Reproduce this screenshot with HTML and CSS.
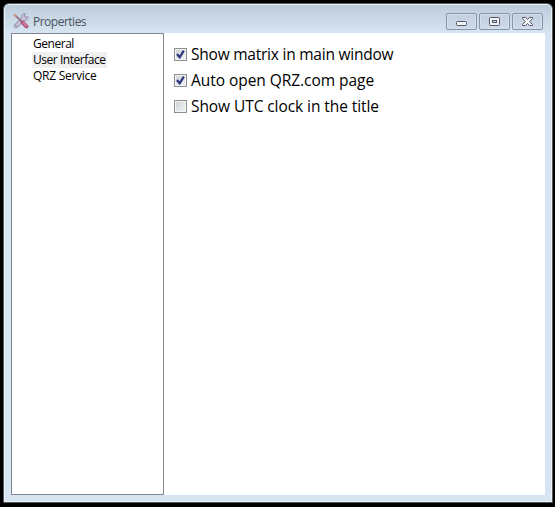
FILE: index.html
```html
<!DOCTYPE html>
<html lang="en">
<head>
<meta charset="utf-8">
<title>Properties</title>
<link rel="stylesheet" href="styles.css">
</head>
<body>
<div class="window">
  <header class="titlebar">
    <svg class="app-icon" width="16" height="16" viewBox="0 0 16 16">
      <path d="M3 13 11 5" stroke="#8f86a8" stroke-width="4.400" stroke-linecap="round"/>
      <path d="M14.800 3.500 12.800 5 11 3.500 12.300 .8C9.300 .6 8 3 8.700 5.500L10.700 7.500C13.500 7.800 15.600 6 14.800 3.500Z" fill="#c9c6dc" stroke="#8f86a8" stroke-width=".9"/>
      <path d="M3 13 11 5" stroke="#c9c6dc" stroke-width="2.600" stroke-linecap="round"/>
      <circle cx="2.800" cy="13.200" r="1.100" fill="#e4ebf4" stroke="#8f86a8" stroke-width=".7"/>
      <path d="M2 2 9 9" stroke="#927c86" stroke-width="1.900"/>
      <path d="M1 1.500 3.500 3.500" stroke="#c69a84" stroke-width="2.400"/>
      <path d="M9.700 9.700 13.400 13.400" stroke="#b4557f" stroke-width="4" stroke-linecap="round"/>
      <path d="M10 9.500 13.500 13" stroke="#d58ba8" stroke-width="1.200"/>
    </svg>
    <h1 class="title"><span>Properties</span></h1>
    <div class="controls">
      <button class="control" aria-label="Minimize"><svg width="29" height="15" viewBox="0 0 29 15"><rect x="9.500" y="7.500" width="10" height="4" rx="1" fill="#f4f4f4" stroke="#535666"/></svg></button>
      <button class="control" aria-label="Maximize"><svg width="29" height="15" viewBox="0 0 29 15"><rect x="9.500" y="3.500" width="10" height="8" rx="1" fill="#f4f4f4" stroke="#535666"/><rect x="12.500" y="6.500" width="4" height="2" fill="#c3d0e0" stroke="#535666"/></svg></button>
      <button class="control" aria-label="Close"><svg width="29" height="15" viewBox="0 0 29 15"><path d="M9.500 3.500H12.500L14.500 5.500 16.500 3.500H19.500V4.500L16.700 7.500 19.500 10.500V11.500H16.500L14.500 9.500 12.500 11.500H9.500V10.500L12.300 7.500 9.500 4.500Z" fill="#f4f4f4" stroke="#535666"/></svg></button>
    </div>
  </header>
  <main class="content">
    <nav class="tree">
      <a class="item">General</a>
      <a class="item selected">User Interface</a>
      <a class="item service">QRZ Service</a>
    </nav>
    <section class="options">
      <label class="option"><span class="box"><svg width="9" height="9" viewBox="0 0 9 9"><path d="M1 4 3.700 7.300 7.800 .6" fill="none" stroke="#2c3580" stroke-width="2.200"/></svg></span><span class="label matrix">Show matrix in main window</span></label>
      <label class="option"><span class="box"><svg width="9" height="9" viewBox="0 0 9 9"><path d="M1 4 3.700 7.300 7.800 .6" fill="none" stroke="#2c3580" stroke-width="2.200"/></svg></span><span class="label">Auto open QRZ.com page</span></label>
      <label class="option"><span class="box"></span><span class="label clock">Show UTC clock in the title</span></label>
    </section>
  </main>
</div>
</body>
</html>
```

FILE: styles.css
```css
* { box-sizing: border-box; }
body {
  margin: 0;
  height: 507px;
  padding: 3px 2px 4px 3px;
  background: #000;
  font-family: "Open Sans", "Noto Sans", sans-serif;
  overflow: hidden;
}
.window {
  height: 500px;
  border: 1px solid #55585c;
  border-radius: 6px 6px 0 0;
  padding: 0 7px 6px;
  background: linear-gradient(#bccbdb, #d7e4f1 29px, #d7e4f1);
  box-shadow: inset 0 0 0 1px #edf2f7;
}
.titlebar { height: 29px; display: flex; }
.app-icon { margin: 9px 0 0 2px; fill: none; }
.title {
  margin: 9px 0 0 4px;
  font-size: 12px;
  line-height: 17px;
  font-weight: 400;
  color: #4a525c;
  letter-spacing: -.5px;
}
.controls { display: flex; gap: 2px; margin: 9px 2px 0 auto; }
.control {
  width: 31px;
  height: 17px;
  padding: 0;
  border: 1px solid #8696aa;
  border-radius: 2px;
  background: linear-gradient(#c2cfdf, #cfdbe9);
  box-shadow: inset 0 0 0 1px #d4dfeb;
}
.control svg { display: block; }
.content { display: flex; height: 462px; background: #fff; }
.tree {
  width: 153px;
  border: 1px solid #82858f;
  padding: 2px 0 0 20px;
  display: flex;
  flex-direction: column;
  align-items: flex-start;
}
.item {
  height: 16px;
  padding: 0 1px;
  font-size: 12px;
  line-height: 16px;
  color: #000;
  white-space: nowrap;
  letter-spacing: -.46px;
}
.service { letter-spacing: -.27px; }
.selected { background: #f0f0f0; }
.options { padding: 8px 0 0 10px; }
.option { display: flex; align-items: center; height: 26px; }
.box {
  width: 13px;
  height: 13px;
  border: 1px solid #8e8f8f;
  padding: 1px;
  background: linear-gradient(135deg, #cbcfd5, #f6f6f6);
  background-clip: content-box;
  box-shadow: inset 0 0 0 1px #f4f4f4;
}
.box svg { display: block; }
.label {
  margin-left: 4px;
  font-size: 15.5px;
  line-height: 22px;
  color: #000;
  white-space: nowrap;
  letter-spacing: -.05px;
}
.matrix { letter-spacing: -.23px; }
.clock { letter-spacing: -.08px; }
```
